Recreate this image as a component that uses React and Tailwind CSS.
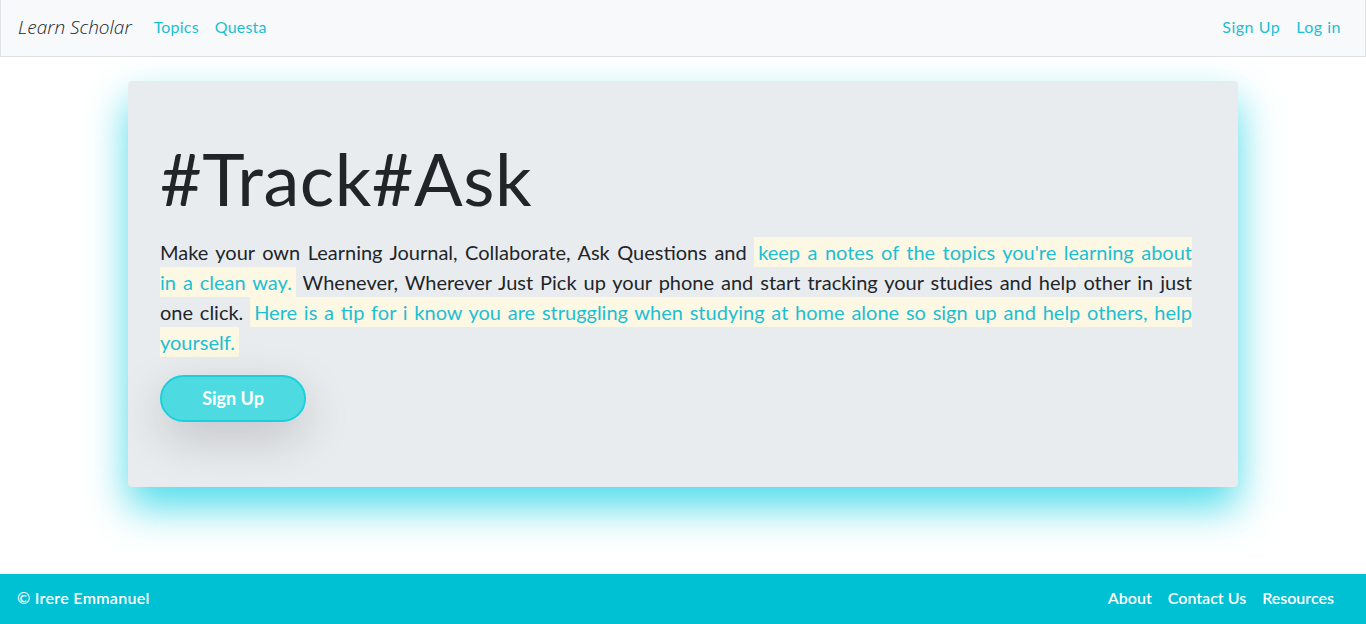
export default function App() {
  const cyan = "text-[#1cbfd3]";
  return (
    <div className="h-screen flex flex-col bg-white font-['Lato',sans-serif] text-[#212529] overflow-hidden">
      <nav className="h-[57px] shrink-0 flex items-center justify-between px-4 bg-[#f8f9fa] border-x border-b border-[#dfe2e5]">
        <div className="flex items-center -mt-[2px]">
          <span className="font-['Open_Sans',sans-serif] italic font-light text-[19px] text-[#212529] mr-[14px] ml-[1px]">
            Learn Scholar
          </span>
          <a className={`px-2 text-[16px] tracking-[0.2px] ${cyan}`}>Topics</a>
          <a className={`px-2 text-[16px] tracking-[0.2px] ${cyan}`}>Questa</a>
        </div>
        <div className="flex items-center -mt-[2px]">
          <a className={`px-2 text-[16px] tracking-[0.5px] ${cyan}`}>Sign Up</a>
          <a className={`px-2 text-[16px] tracking-[0.5px] ${cyan}`}>Log in</a>
        </div>
      </nav>

      <main className="flex-1 flex justify-center pt-6">
        <section className="w-[1110px] h-[406px] bg-[#e9ecef] rounded px-8 pt-16 shadow-[0_20px_40px_rgba(0,205,225,0.7)]">
          <h1 className="text-[72px] leading-[86px] font-normal -mt-[10px] mb-[16px] tracking-[0.5px] text-[#212529]">
            #Track#Ask
          </h1>
          <div className="w-[1032px] text-[20px] leading-[30px] text-[#212529]">
            <div className="text-justify [text-align-last:justify]">
              Make your own Learning Journal, Collaborate, Ask Questions and{" "}
              <mark className={`bg-[#fcf8e3] pl-1 py-[3px] ${cyan}`}>keep a notes of the topics you're learning about</mark>
            </div>
            <div className="text-justify [text-align-last:justify]">
              <mark className={`bg-[#fcf8e3] pr-1 py-[3px] ${cyan}`}>in a clean way.</mark> Whenever, Wherever Just Pick up
              your phone and start tracking your studies and help other in just
            </div>
            <div className="text-justify [text-align-last:justify]">
              one click.{" "}
              <mark className={`bg-[#fcf8e3] pl-1 py-[3px] ${cyan}`}>
                Here is a tip for i know you are struggling when studying at home alone so sign up and help others, help
              </mark>
            </div>
            <div>
              <mark className={`bg-[#fcf8e3] pr-1 py-[3px] ${cyan}`}>yourself.</mark>
            </div>
          </div>
          <button className="mt-[18px] w-[146px] h-[47px] rounded-full bg-[#4ddbe1] border-2 border-[#1ccfdc] text-white font-bold text-[18px] shadow-[0_16px_48px_rgba(0,0,0,0.175)]">
            Sign Up
          </button>
        </section>
      </main>

      <footer className="h-[50px] shrink-0 bg-[#00c1d3] flex items-center justify-between pl-[17px] pr-8 text-white text-[16px] font-semibold">
        <span className="-mt-[2px] tracking-[0.3px]">© Irere Emmanuel</span>
        <div className="flex gap-4 -mt-[2px]">
          <a>About</a>
          <a>Contact Us</a>
          <a>Resources</a>
        </div>
      </footer>
    </div>
  );
}
